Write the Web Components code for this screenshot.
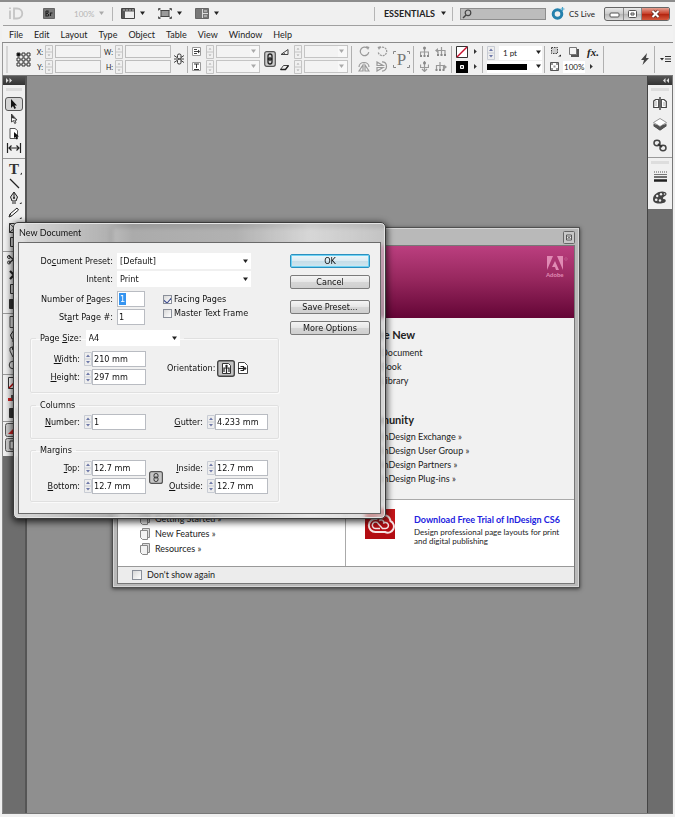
<!DOCTYPE html>
<html lang="en">
<head>
<meta charset="utf-8">
<title>New Document</title>
<style>
html,body{height:100%}
body{margin:0;background:#ececec;overflow:hidden;font-family:Lato,"Open Sans","Noto Sans",sans-serif;font-size:9px;line-height:12px;color:#222}
</style>
</head>
<body>
<app-window></app-window>
<script>
const BASE = `*{box-sizing:border-box} button{font:inherit;color:inherit;padding:0;margin:0;border:0;background:none} input,select{font:inherit;color:inherit;margin:0} svg{display:block}`;
function define(name, html) {
  const t = document.createElement('template');
  t.innerHTML = `<style>${BASE}</style>` + html;
  customElements.define(name, class extends HTMLElement {
    constructor() { super(); this.attachShadow({mode:'open'}).append(t.content.cloneNode(true)); }
  });
}

/* ---------- icons: [width, height, markup] ---------- */
const S = 'fill="none" stroke="#333" stroke-width="1"';
const G = 'fill="none" stroke="#999" stroke-width="1.2"';
const ICONS = {
  id:[15,13,'<path d="M1 3.5V12M1 .5v1.500M5 1.500v10h3c7 0 7-10 0-10z" fill="none" stroke="#c4c4c4" stroke-width="1.800"/>'],
  br:[12,11,'<path d="M.5 .5h11v10H.5z" fill="#777" stroke="#666"/><path d="M3 3v5h2.500M3 5.500h2M3 3h2v2M5.500 6v2M7.500 8V5h2" fill="none" stroke="#222" stroke-width="1.200"/>'],
  down:[7,5,'<path d="M1 .5h5L3.500 4z" fill="#222"/>'],
  downlight:[7,5,'<path d="M1 .5h5L3.500 4z" fill="#aaa"/>'],
  right:[5,7,'<path d="M1 1v5L3.800 3.500z" fill="#333"/>'],
  rulers:[14,11,'<path d="M.5 .5h13v10H.5z" fill="#eee" stroke="#444"/><path d="M1 1h12v2.500H4V10H1z" fill="#555"/><path d="M3 1v2M6 1v2M9 1v2M12 1v2" stroke="#ddd" stroke-width=".7"/>'],
  screen:[14,11,'<path d="M3 2.500h8v6H3z" fill="#999" stroke="#444"/><path d="M.5 2.500V.5h2M11.500 .5h2v2M.5 8.500v2h2M11.500 10.500h2v-2M1 1l2 1.500M13 1l-2 1.500M1 10l2-1.500M13 10l-2-1.500" fill="none" stroke="#555"/>'],
  arrange:[14,11,'<path d="M.5 .5h13v10H.5z" fill="#777" stroke="#666"/><path d="M7.500 1v9M7.500 5.500H13" stroke="#ddd"/><path d="M9 2h3v2H9zM9 7h3v2H9z" fill="#aaa"/>'],
  search:[10,10,'<circle cx="6" cy="3.800" r="2.800" fill="none" stroke="#444" stroke-width="1.200"/><path d="M4 6L1 9" stroke="#444" stroke-width="1.500"/>'],
  live:[14,13,'<circle cx="6.500" cy="7" r="4.300" fill="none" stroke="#2581ad" stroke-width="3"/><path d="M11.500 0v4M9.500 2h4" stroke="#4aa5ca" stroke-width="1.200"/>'],
  ref:[15,15,(()=>{let s='<path d="M2.500 2.500h10v10h-10zM7.500 2.500v10M2.500 7.500h10" fill="none" stroke="#777" stroke-width=".7"/>';for(let i=0;i<9;i++)s+=`<path d="M${i%3*5+1} ${(i/3|0)*5+1}h3v3h-3z" fill="${i?'#f4f4f4':'#000'}" stroke="#333"/>`;return s})()],
  chain:[10,12,'<rect x="3.500" y="1" width="3.500" height="5" rx="1.500" '+S+'/><rect x="3.500" y="6" width="3.500" height="5" rx="1.500" '+S+'/><path d="M0 2.500l3 2M0 6h3M0 9.500l3-2M10 2.500l-3 2M10 6H7M10 9.500l-3-2" stroke="#444"/>'],
  link:[12,16,'<rect x=".7" y=".7" width="10.600" height="14.600" rx="2" fill="#ccc" stroke="#555" stroke-width="1.200"/><rect x="4" y="3" width="4" height="6" rx="2" fill="none" stroke="#222" stroke-width="1.300"/><rect x="4" y="7" width="4" height="6" rx="2" fill="none" stroke="#222" stroke-width="1.300"/>'],
  sx:[9,9,'<path d="M.5 .5h8v8h-8z" fill="#fff" stroke="#999"/><path d="M2 2.500h3M2 4.500h5M2 6.500h3" stroke="#444"/><path d="M6 2.500l2 2-2 2z" fill="#333"/>'],
  sy:[9,9,'<path d="M.5 .5h8v8h-8z" fill="#fff" stroke="#999"/><path d="M2 2h5M4.500 2v4M2 7.500h5" stroke="#333"/>'],
  angle:[9,8,'<path d="M1 6.500h7V1.500zM3.500 4.500l1.500 2" fill="none" stroke="#444"/>'],
  shear:[9,8,'<path d="M.5 6.500h5l3-4h-5z" fill="none" stroke="#444"/><path d="M.5 6.500h5l3-4" fill="none" stroke="#222" stroke-width="1.300"/>'],
  cw:[11,11,'<path d="M8.500 2.200a4.300 4.300 0 1 0 1.300 4" '+G+'/><path d="M7 0l3.500 1L9 4z" fill="#999"/>'],
  ccw:[11,11,'<path d="M2.500 2.200a4.300 4.300 0 1 1-1.300 4" '+G+' stroke-dasharray="2 .8"/><path d="M4 0L.5 1 2 4z" fill="#999"/>'],
  fliph:[12,11,'<path d="M5 4v6H1zM7 4v6h4zM1 6C1 0 11 0 11 6" '+G+'/>'],
  flipv:[12,11,'<path d="M1 4.500h6L1 1zM1 6.500h6l-6 3.500zM6 .8c6 0 6 9.400 0 9.400" '+G+'/>'],
  p:[17,17,'<path d="M.5 3V.5H3M14 .5h2.500V3M.5 14v2.500H3M14 16.500h2.500V14" fill="none" stroke="#888"/>'],
  tree1:[9,11,'<path d="M4.500 3v3M.5 10V6h8v4M4.500 6v4" '+G+'/><circle cx="4.500" cy="2" r="1.500" fill="#888"/><path d="M0 9h2v2H0zM3.500 9h2v2h-2zM7 9h2v2H7z" fill="#888"/>'],
  tree2:[9,11,'<path d="M4.500 0v10M.5 3.500v3h8v-3M2 8l2.500 2.500L7 8" '+G+'/><circle cx="4.500" cy="2" r="1.500" fill="#888"/>'],
  tree3:[12,9,'<path d="M3 8V3.500h7V8M6.500 0v8" '+G+'/><path d="M0 3.500L3 1v5z" fill="#999"/><path d="M2 7h2v2H2zM5.500 7h2v2h-2zM9 7h2v2H9z" fill="#888"/>'],
  tree4:[12,9,'<path d="M1.500 8V3.500h7V8M5 0v8" '+G+'/><path d="M12 5L9 2.500v5z" fill="#999"/><path d="M.5 7h2v2h-2zM4 7h2v2H4zM7.500 7h2v2h-2z" fill="#888"/>'],
  nofill:[12,12,'<path d="M.5 .5h11v11H.5z" fill="#fff" stroke="#333"/><path d="M1 11L11 1" stroke="#c8102e" stroke-width="1.500"/>'],
  stroke:[12,12,'<path d="M0 0h12v12H0z" fill="#000"/><path d="M4.500 4.500h3v3h-3z" fill="#555" stroke="#fff"/>'],
  fxbox:[11,11,'<path d="M1.500 1.500h6v6h-6z" fill="#ccc" stroke="#444" stroke-dasharray="1.500 1"/><path d="M8 10.500h3v-2z" fill="#222"/>'],
  shadow:[10,10,'<path d="M2 2h8v8H2z" fill="#555"/><path d="M.5 .5h7v7h-7z" fill="#f4f4f4" stroke="#777"/>'],
  checker:[9,9,'<path d="M.5 .5h8v8h-8z" fill="#fff" stroke="#555"/><path d="M1 1h2v2H1zM6 1h2v2H6zM3.500 3.500h2v2h-2zM1 6h2v2H1zM6 6h2v2H6z" fill="#999"/>'],
  bolt:[8,12,'<path d="M6 0L0 7h3L1.500 12 8 5H5z" fill="#444"/>'],
  flymenu:[11,8,'<path d="M0 3h4L2 5.500z" fill="#222"/><path d="M5 1.500h6M5 4h6M5 6.500h6" stroke="#333"/>'],
  sel:[18,14,'<rect x=".5" y=".5" width="17" height="13" rx="2.500" fill="#d4d4d4" stroke="#555"/><path d="M6 2v9l2-2 1.500 3 1.500-1-1.500-2.500H12z" fill="#111"/>'],
  dsel:[18,12,'<path d="M6.500 1v8l2-1.500 1.200 3 1.300-.7L9.800 7h2.200z" fill="#fff" stroke="#333" stroke-width=".9"/><path d="M6.500 1v4l4 1z" fill="#333"/>'],
  page:[18,12,'<path d="M5 .5h5l2.500 2v8H5z" fill="#fff" stroke="#555"/><path d="M9 4v6l1.500-1 1 2.500 1.200-.5-1-2.500H14z" fill="#111"/>'],
  gap:[18,12,'<path d="M2.500 1v10M15.500 1v10M4 6h10M6.500 3.500L4 6l2.500 2.500M11.500 3.500L14 6l-2.500 2.500" fill="none" stroke="#222" stroke-width="1.200"/>'],
  type:[18,12,'<path d="M15 11.500h2v-2z" fill="#222"/>'],
  line:[18,12,'<path d="M5 1l9 9" stroke="#222" stroke-width="1.200"/>'],
  pen:[18,12,'<path d="M9 0l3.500 5L11 9H7L5.500 5zM9 1v5M7 11h4" fill="#ddd" stroke="#222"/><circle cx="9" cy="6" r="1" fill="#222"/><path d="M14.500 12h2v-2z" fill="#222"/>'],
  pencil:[18,12,'<path d="M4 10l1-3 7-6 1.500 2-7 6zM5 7l1.500 2" fill="#fff" stroke="#222"/><path d="M14.500 12h2v-2z" fill="#222"/>'],
  frame:[18,12,'<path d="M4.500 1.500h10v9h-10zM4.500 1.500l10 9M14.500 1.500l-10 9" '+S+'/>'],
  rect:[18,12,'<path d="M5.500 1.500h9v9h-9z" fill="#ddd" stroke="#333"/>'],
  scis:[18,12,'<path d="M4 2l9 7M4 9l9-7" stroke="#333" stroke-width="1.500"/><circle cx="4" cy="3" r="1.500" '+S+'/><circle cx="4" cy="8.500" r="1.500" '+S+'/>'],
  xf:[18,12,'<path d="M5 2l8 8M5 10l8-8" stroke="#222" stroke-width="2.200"/>'],
  grad:[18,12,'<path d="M4.500 1.500h10v9h-10z" fill="#888" stroke="#333"/><path d="M5 2h4v8H5z" fill="#333"/>'],
  note:[18,12,'<path d="M5 .5h9v8l-3 3H5z" fill="#eee" stroke="#444"/>'],
  hand:[18,12,'<path d="M5 6V3l2-1 1 3V1h2v4l1-3 2 1v5l-3 4H8z" fill="#fff" stroke="#333"/>'],
  zoom:[18,12,'<circle cx="8" cy="5" r="3.800" '+S+'/><path d="M11 8l3 3" stroke="#333" stroke-width="2"/>'],
  swno:[18,12,'<path d="M3.500 .5h11v11h-11z" fill="#fff" stroke="#333"/><path d="M4 11L14 1" stroke="#c00" stroke-width="1.500"/>'],
  swap:[18,8,'<path d="M3 4h3V1h7v6H3z" fill="#555"/><path d="M3 4h4v3H3z" fill="#c22"/>'],
  prev:[18,14,'<rect x=".5" y=".5" width="17" height="13" rx="2" fill="#ccc" stroke="#555"/><path d="M3 11l8-8v8z" fill="#c22"/>'],
  norm:[18,14,'<rect x=".5" y=".5" width="17" height="13" rx="2" fill="#ccc" stroke="#555"/><path d="M5 3h8v8H5z" fill="#eee" stroke="#333"/>'],
  pages:[14,13,'<path d="M7 0v13" stroke="#333" stroke-width="1.300"/><path d="M.7 4l2-1.500h3v8h-5zM8.300 2.500H11l2.300 2v6h-5z" fill="#fff" stroke="#444" stroke-width="1.200"/><path d="M3 4v5M11 5v4" stroke="#aaa"/>'],
  layers:[14,13,'<path d="M7 4l6.500 4L7 12.500.5 8z" fill="#333"/><path d="M7 .5l6.500 4L7 8.500.5 4.500z" fill="#fff" stroke="#999"/><path d="M.5 5.500L7 9l6.500-3.500V8L7 12.500.5 8z" fill="#555"/>'],
  links:[14,13,'<ellipse cx="4" cy="4" rx="3" ry="2.700" fill="#eee" stroke="#444" stroke-width="1.500"/><ellipse cx="10" cy="9" rx="3" ry="2.700" fill="#eee" stroke="#444" stroke-width="1.500"/><path d="M5 5l4 3" stroke="#333" stroke-width="2"/>'],
  strokes:[13,11,'<path d="M0 1h13" stroke="#555" stroke-dasharray="1 1"/><path d="M0 3.500h13" stroke="#777"/><path d="M0 6h13" stroke="#444" stroke-width="1.500"/><path d="M0 9.500h13" stroke="#222" stroke-width="2.500"/>'],
  palette:[14,13,'<path d="M12 1C7-1 0 3 0 8c0 5 6 5 10 4 4-1 3-4 1-4-2 0-1-2 1-3s2-3 0-4z" fill="#444"/><g fill="#eee"><circle cx="8" cy="3.200" r="1.200"/><circle cx="4.200" cy="5" r="1.200"/><circle cx="3.200" cy="8.800" r="1.300"/><circle cx="7" cy="9.500" r="1.200"/><circle cx="11.500" cy="3" r=".8"/></g>'],
  expand:[8,5,'<path d="M1 0l2.500 2.500L1 5zM4.500 0L7 2.500 4.500 5z" fill="#ddd"/>'],
  collapse:[8,5,'<path d="M3.500 0L1 2.500 3.500 5zM7 0L4.500 2.500 7 5z" fill="#ddd"/>'],
  min:[19,14,'<rect x="5" y="6" width="9" height="4" rx="1" fill="#fff" stroke="#555"/>'],
  max:[19,14,'<rect x="5.500" y="3.500" width="8" height="7" rx="1" fill="#fff" stroke="#555"/><path d="M8 6h3v2H8z" fill="#ddd" stroke="#555"/>'],
  close:[29,14,'<path d="M11.500 4l6 6M17.500 4l-6 6" stroke="#5d2a22" stroke-width="3.600"/><path d="M11.500 4l6 6M17.500 4l-6 6" stroke="#fff" stroke-width="2"/>'],
  wclose:[12,13,'<rect x=".5" y=".5" width="11" height="12" rx="1" fill="#c8c8c8" stroke="#666"/><path d="M3.500 4h5v5h-5z" fill="#eee" stroke="#555"/><path d="M4.500 5l3 3M7.500 5l-3 3" stroke="#555"/>'],
  adobe:[22,16,'<g fill="#e08bb4"><path d="M1 0h6L1 14zM11 0h6v14zM9 5l4 9h-3l-1-3H6z"/></g><circle cx="20" cy="3" r="1.300" fill="none" stroke="#c0608f" stroke-width=".7"/>'],
  doc:[10,12,'<path d="M2.500 .5h7v9h-7z" fill="#dcdcdc" stroke="#888"/><path d="M.5 2.500h7v9h-5l-2-2z" fill="#f2f2f2" stroke="#888"/>'],
  cc:[30,32,'<path d="M0 1h30v30H0z" fill="#b30d12"/><path d="M0 1h30v13H0z" fill="#cf1d20" opacity=".6"/><g fill="none" stroke="#f6e4e4" stroke-width="2"><path d="M20 24H10.500a6.500 6.500 0 1 1 1-12.900A7.500 7.500 0 0 1 25.500 13 5.800 5.800 0 0 1 20 24z"/><path d="M15 20.500h-4.500a3.200 3.200 0 1 1 2.800-4.800l4.200 4.800h3a3 3 0 1 0-2.300-5M14 12.500c2.500-1.500 4.500 0 5 2" stroke-width="1.500"/></g>'],
  portrait:[18,17,'<rect x=".7" y=".7" width="16.600" height="15.600" rx="2" fill="#c3c3c3" stroke="#444" stroke-width="1.400"/><path d="M5.500 3.500h6l2 2v8h-8z" fill="#fff" stroke="#333"/><circle cx="9.500" cy="6" r="1.200" fill="#222"/><path d="M7 12V8h5v4M9.500 7v6" stroke="#222" stroke-width="1.200" fill="none"/>'],
  landscape:[12,13,'<path d="M1.500 .5h6l3 3v8h-9z" fill="#fff" stroke="#444"/><circle cx="8" cy="6.500" r="1.300" fill="#222"/><path d="M1 6.500h6M3.500 4.500h3v4h-3" stroke="#222" stroke-width="1.200" fill="none"/>'],
  linkbtn:[14,13,'<rect x=".6" y=".6" width="12.800" height="11.800" rx="2" fill="#c6c6c6" stroke="#555" stroke-width="1.200"/><rect x="5" y="2.500" width="4" height="4.500" rx="1.800" '+S+'/><rect x="5" y="6" width="4" height="4.500" rx="1.800" '+S+'/>'],
  spin:[8,14,'<path d="M.5 .5h7v13h-7zM.5 7h7" fill="#eee" stroke="#c8ccd4"/><path d="M2 5h4L4 2.500zM2 9h4l-2 2.500z" fill="#6d78a8"/>'],
  spinlight:[8,14,'<path d="M.5 .5h7v13h-7zM.5 7h7" fill="#f0f0f0" stroke="#c4c4c4"/><path d="M2.500 4.500h3L4 3zM2.500 9.500h3L4 11z" fill="#aaa"/>'],
};
customElements.define('ui-icon', class extends HTMLElement {
  connectedCallback() {
    if (this.shadowRoot) return;
    const [w,h,m] = ICONS[this.getAttribute('name')];
    this.attachShadow({mode:'open'}).innerHTML = `<style>:host{display:block;flex:none;width:${w}px;height:${h}px}svg{display:block}</style><svg width="${w}" height="${h}" viewBox="0 0 ${w} ${h}" aria-hidden="true">${m}</svg>`;
  }
});

/* ---------- form elements of the dialog ---------- */
customElements.define('ui-field', class extends HTMLElement {
  connectedCallback() {
    if (this.shadowRoot) return;
    const a = n => this.getAttribute(n);
    const spin = this.hasAttribute('spin');
    const control = this.hasAttribute('select')
      ? `<span class="sel"><select id="c"><option>${a('value')}</option></select><ui-icon name="down"></ui-icon></span>`
      : `${spin?'<ui-icon name="spin"></ui-icon>':''}<span class="box"><input id="c" value="${a('value')}"${this.hasAttribute('picked')?' class="picked"':''}></span>`;
    this.attachShadow({mode:'open'}).innerHTML = `<style>${BASE}
      :host{display:flex;align-items:center;height:16px}
      label{width:var(--label);flex:none;text-align:right;margin-right:4px;white-space:nowrap}
      .box{width:var(--box,54px);height:16px;background:#fff;border:1px solid #b9bcc2;flex:none;display:flex;align-items:center}
      input{width:100%;border:0;padding:0 1px;height:14px;background:none;outline:0;line-height:14px}
      .picked{width:7px;padding:0 0 0 1px;margin-left:1px;background:#3594f0;color:#fff;height:12px;line-height:12px}
      .sel{width:var(--box,134px);height:16px;background:#fff;display:flex;align-items:center;padding-right:2px}
      select{appearance:none;border:0;background:none;flex:1;min-width:0;height:16px;padding:0 3px;outline:0}
    </style><label for="c">${this.innerHTML}</label>${control}`;
  }
});
customElements.define('ui-check', class extends HTMLElement {
  connectedCallback() {
    if (this.shadowRoot) return;
    this.attachShadow({mode:'open'}).innerHTML = `<style>${BASE}
      :host{display:block}
      label{display:flex;align-items:center;gap:2px;height:14px;white-space:nowrap}
      input{appearance:none;width:9px;height:9px;border:1px solid #8a8f99;background:linear-gradient(135deg,#d8d8d8,#fff);display:grid;place-items:center;flex:none;overflow:hidden}
      input:checked::after{content:"";width:4px;height:6px;border:solid #35458c;border-width:0 1px 1px 0;transform:rotate(40deg)}
      :host([large]) label{gap:5px} :host([large]) input{width:10px;height:10px}
    </style><label><input type="checkbox"${this.hasAttribute('checked')?' checked':''}><slot></slot></label>`;
  }
});
define('ui-button', `<style>
  :host{display:block}
  button{display:block;width:100%;height:14px;line-height:12px;border:1px solid #7b7b7b;border-radius:2px;background:linear-gradient(#f4f4f4,#e6e6e6 48%,#d6d6d6 52%,#cfcfcf);color:#111}
  :host([primary]) button{border-color:#2c8fbe;box-shadow:inset 0 0 0 1px #6fd3f5;background:linear-gradient(#eef6fa,#dcebf2 48%,#c6dde8 52%,#cfe6ef)}
</style><button type="button"><slot></slot></button>`);
define('ui-group', `<style>
  :host{display:block}
  fieldset{margin:0;padding:0;border:1px solid #e0e0e0;border-radius:2px;box-shadow:inset 1px 1px #fafafa,1px 1px #fafafa;min-width:0}
  legend{padding:0 4px;margin-left:5px;height:var(--legend,12px)}
</style><fieldset><legend><slot name="legend"></slot></legend><slot></slot></fieldset>`);

define('new-document', `<style>
  :host{display:flex;flex-direction:column;padding:0 4px 4px;border:1px solid #3a3a3a;border-radius:5px;
    background:linear-gradient(90deg,rgba(225,225,225,.9),rgba(190,190,190,.7) 26%,rgba(165,165,165,.7) 32%,rgba(175,175,175,.7) 60%,rgba(225,225,225,.75) 80%,rgba(200,200,200,.7));
    backdrop-filter:blur(2px);box-shadow:inset 0 0 0 1px #e4e4e4,0 2px 7px 1px rgba(0,0,0,.75);
    font-family:"DejaVu Sans Condensed","Open Sans",sans-serif;color:#111}
  h1{margin:0;font:9px/19px Lato,"Open Sans",sans-serif;height:19px;padding-left:1px}
  form{flex:1;background:#f0f0f0;border:1px solid #6a6a6a;display:grid;grid-template-columns:249px 80px;column-gap:11px;padding:10px 10px 10px 11px;align-content:start;align-items:start}
  .f{display:grid}
  .top{display:grid;row-gap:2px;--label:83px}
  .pair{display:grid;grid-template-columns:auto 1fr;column-gap:18px;margin-top:4px;--box:28px;--label:83px}
  .pair>div{display:grid;row-gap:2px}
  .pair>.checks{row-gap:0;align-content:start;padding-top:1px}
  .size{margin-top:5px;--legend:16px}
  .size ui-field[select]{--label:auto;--box:94px}
  .row{display:grid;grid-template-columns:115px 1fr;align-items:center;--label:49px}
  .stack{display:grid;row-gap:2px}
  .ori{display:flex;align-items:center;padding-left:21px;gap:2px}
  .ori button{display:block}
  .cols{margin-top:6px} .cols .row{padding:3px 0 8px}
  .marg{margin-top:5px} .marg .row{padding:4px 0 7px;grid-template-columns:118px 14px 1fr}
  .size .row{padding:5px 0 7px}
  .cols .r{--label:57px} .marg .r{--label:40px}
  .r{--box:53px}
  .buttons{display:grid;padding-top:1px;row-gap:7px}
  .buttons ui-button:nth-child(3){margin-top:4px}
</style>
<h1>New Document</h1>
<form>
 <div class="f">
  <div class="top"><ui-field select value="[Default]">Do<u>c</u>ument Preset:</ui-field><ui-field select value="Print">Intent:</ui-field></div>
  <div class="pair"><div><ui-field value="1" picked>Number of <u>P</u>ages:</ui-field><ui-field value="1">St<u>a</u>rt Page #:</ui-field></div>
   <div class="checks"><ui-check checked>Facing Pages</ui-check><ui-check>Master Text Frame</ui-check></div></div>
  <ui-group class="size"><ui-field slot="legend" select value="A4">Page <u>S</u>ize:</ui-field>
   <div class="row"><div class="stack"><ui-field spin value="210 mm"><u>W</u>idth:</ui-field><ui-field spin value="297 mm"><u>H</u>eight:</ui-field></div>
    <div class="ori">Orientation:<button type="button" aria-label="Portrait"><ui-icon name="portrait"></ui-icon></button><button type="button" aria-label="Landscape"><ui-icon name="landscape"></ui-icon></button></div></div>
  </ui-group>
  <ui-group class="cols"><span slot="legend">Columns</span>
   <div class="row"><ui-field spin value="1"><u>N</u>umber:</ui-field><ui-field class="r" spin value="4.233 mm"><u>G</u>utter:</ui-field></div>
  </ui-group>
  <ui-group class="marg"><span slot="legend">Margins</span>
   <div class="row"><div class="stack"><ui-field spin value="12.7 mm"><u>T</u>op:</ui-field><ui-field spin value="12.7 mm"><u>B</u>ottom:</ui-field></div>
    <button type="button" aria-label="Make all settings the same"><ui-icon name="linkbtn"></ui-icon></button>
    <div class="stack r"><ui-field spin value="12.7 mm"><u>I</u>nside:</ui-field><ui-field spin value="12.7 mm"><u>O</u>utside:</ui-field></div></div>
  </ui-group>
 </div>
 <div class="buttons"><ui-button primary>OK</ui-button><ui-button>Cancel</ui-button><ui-button>Save Preset...</ui-button><ui-button>More Options</ui-button></div>
</form>`);

/* ---------- welcome screen ---------- */
define('welcome-screen', `<style>
  :host{display:flex;flex-direction:column;background:#b9b9b9;border:1px solid #505050;padding:0 4px 3px;box-shadow:inset 0 0 0 1px #d6d6d6,0 1px 4px rgba(0,0,0,.6);color:#222}
  header{height:17px;display:flex;justify-content:flex-end;align-items:center;padding-top:2px}
  .banner{height:73px;background:linear-gradient(#bb3f7f,#98285f 45%,#640536);display:flex;justify-content:flex-end;padding:10px 6px;border-top:1px solid #777}
  .logo{width:22px;color:#e08bb4;font-size:6px;line-height:6px;font-weight:700}
  .main{flex:1;display:grid;grid-template-columns:228px 1fr;background:#fff;min-height:0}
  .left{border-right:1px solid #aaa;padding:0 0 10px 22px;display:flex;flex-direction:column;justify-content:flex-end}
  .left a{height:15px;gap:5px}
  a{display:flex;align-items:center;height:14px;color:#222;text-decoration:none;font-size:9px;white-space:nowrap}
  .right{display:flex;flex-direction:column}
  .links{background:#f1f1f1;flex:1;padding:10px 0 0 35px;border-bottom:1px solid #aaa}
  h2{font-size:11px;line-height:14px;margin:0 0 4px -24px}
  .links h2:nth-of-type(2){margin-top:25px;margin-bottom:3px}
  .ad{height:66px;display:flex;padding:9px 0 0 19px;gap:19px}
  .ad ui-icon{margin-top:-1px}
  .ad a{color:#2222e0;font-weight:700;height:19px;align-items:flex-start;padding-top:5px}
  p{margin:0;font-size:8px;line-height:9px;width:150px}
  footer{height:17px;background:#ececec;border-top:1px solid #999;padding:1px 0 0 14px}
  .in{flex:1;display:flex;flex-direction:column;border:1px solid #777;border-top:0;min-height:0}
</style>
<header><button type="button" aria-label="Close"><ui-icon name="wclose"></ui-icon></button></header>
<div class="in">
<div class="banner"><div class="logo"><ui-icon name="adobe"></ui-icon>Adobe</div></div>
<div class="main">
 <div class="left"><a href="#"><ui-icon name="doc"></ui-icon>Getting Started »</a><a href="#"><ui-icon name="doc"></ui-icon>New Features »</a><a href="#"><ui-icon name="doc"></ui-icon>Resources »</a></div>
 <div class="right"><div class="links"><h2>Create New</h2><a href="#">Document</a><a href="#">Book</a><a href="#">Library</a>
  <h2>Community</h2><a href="#">InDesign Exchange »</a><a href="#">InDesign User Group »</a><a href="#">InDesign Partners »</a><a href="#">InDesign Plug-ins »</a></div>
  <div class="ad"><ui-icon name="cc"></ui-icon><div><a href="#">Download Free Trial of InDesign CS6</a><p>Design professional page layouts for print and digital publishing</p></div></div></div>
</div>
<footer><ui-check large>Don't show again</ui-check></footer>
</div>`);

/* ---------- bars ---------- */
define('title-bar', `<style>
  :host{display:flex;align-items:center;height:24px;border-bottom:1px solid #a0a0a0;margin:0 1px 0 1px;padding:0 2px 0 6px;background:#f0f0f0}
  button{display:flex;align-items:center;gap:4px;white-space:nowrap}
  .v{width:1px;height:14px;background:#b5b5b5}
  .bridge{margin-left:19px}
  .zoom{color:#b5b5b5;margin:0 7px 0 19px;gap:4px;font-size:8px}
  .a{margin-left:8px}.b{margin-left:12px}
  .ws{margin:0 5px 0 9px;font-weight:700;gap:5px}
  .search{display:flex;align-items:center;flex:none;width:86px;height:12px;border:1px solid #8d8d8d;background:#bcbcbc;padding-left:1px;margin:0 5px 0 7px}
  .search input{width:70px;height:10px;border:0;background:none;outline:0}
  .live{font-size:8px}
  .win{margin-left:9px;display:flex;border:1px solid #666;border-radius:2px 2px 3px 3px;overflow:hidden;background:linear-gradient(#e9e9e9,#c9c9c9 50%,#b6b6b6 52%,#ddd)}
  .win button+button{border-left:1px solid #888}
  .win button{height:12px;width:18px;justify-content:center}
  .win .x{width:28px;background:linear-gradient(#e4a193,#c8402a 48%,#b32510 52%,#d4583c)}
  .spring{margin-left:auto}
</style>
<ui-icon name="id"></ui-icon><button type="button" class="bridge" aria-label="Bridge"><ui-icon name="br"></ui-icon></button>
<button type="button" class="zoom">100%<ui-icon name="downlight"></ui-icon></button><span class="v"></span>
<button type="button" class="a" aria-label="View options"><ui-icon name="rulers"></ui-icon><ui-icon name="down"></ui-icon></button>
<button type="button" class="b" aria-label="Screen mode"><ui-icon name="screen"></ui-icon><ui-icon name="down"></ui-icon></button>
<button type="button" class="b" aria-label="Arrange"><ui-icon name="arrange"></ui-icon><ui-icon name="down"></ui-icon></button>
<span class="v spring"></span><button type="button" class="ws">ESSENTIALS<ui-icon name="down"></ui-icon></button><span class="v"></span>
<label class="search" aria-label="Search"><ui-icon name="search"></ui-icon><input type="text"></label>
<button type="button" class="live"><ui-icon name="live"></ui-icon>CS Live</button>
<div class="win"><button type="button" aria-label="Minimize"><ui-icon name="min"></ui-icon></button><button type="button" aria-label="Maximize"><ui-icon name="max"></ui-icon></button><button type="button" class="x" aria-label="Close"><ui-icon name="close"></ui-icon></button></div>`);
define('menu-bar', `<style>
  :host{display:flex;gap:11px;height:17px;padding-top:1px;align-items:center;padding-left:7px;background:#f2f2f2;border-bottom:1px solid #8a8a8a}
</style>${['File','Edit','Layout','Type','Object','Table','View','Window','Help'].map(x=>`<button type="button">${x}</button>`).join('')}`);

const num = lab => `<label class="n">${lab}<ui-icon name="spinlight"></ui-icon><input></label>`;
const combo = icon => `<label class="n c"><ui-icon name="${icon}" class="k"></ui-icon><ui-icon name="spinlight"></ui-icon><span><input><ui-icon name="downlight"></ui-icon></span></label>`;
const icons = (...names) => names.map(n => `<ui-icon name="${n}"></ui-icon>`).join('');
define('control-bar', `<style>
  :host{display:flex;align-items:center;height:33px;background:#f0f0f0;border-bottom:1px solid #777;border-left:1px solid #999;padding:0 2px 0 3px;font-size:8px}
  .g{display:grid;row-gap:1px;align-content:center;flex:none}
  .grip{width:2px;height:27px;background:#d5d5d5;margin-right:8px}
  .n{display:flex;align-items:center;height:14px;gap:2px}
  .n input{width:46px;height:13px;border:1px solid #bdbdbd;background:#f3f3f3;padding:0}
  .xy{margin-left:6px;font-size:7px}
  .xy .n{width:64px;justify-content:flex-end}
  .c span{display:flex;align-items:center;width:44px;height:13px;border:1px solid #c4c4c4;background:#f8f8f8;padding-right:2px}
  .c span input{flex:1;min-width:0;border:0;height:11px}
  .k{margin-right:3px}
  .v{width:1px;height:27px;background:#b0b0b0;flex:none}
  .i{grid-template-columns:auto auto;justify-items:center;align-items:center;gap:4px 6px}
  .sw{gap:3px 5px}
  .p{display:grid;place-items:center;margin:0 3px 0 5px;font:17px/17px "Liberation Serif",serif;color:#777}
  .p>*{grid-area:1/1}
  .pt{display:flex;align-items:center;gap:4px;height:14px}
  .pt .s{display:flex;align-items:center;background:#fff}
  .pct{background:#fff;padding:0 1px}
  select{appearance:none;border:0;background:#fff;width:36px;height:14px;padding:0 0 0 4px;font-size:8px}
  .bar{display:flex;align-items:center;gap:8px;height:12px;background:#fff}
  .bar i{width:40px;height:6px;background:#000}
  .fx{font:italic 700 11px/12px "Liberation Serif",serif}
  .end{margin-left:auto;display:flex;align-items:center;gap:5px}
  .m3{margin:0 3px}.m4{margin:0 4px}.m5{margin:0 5px 0 2px}.m6{margin:0 6px 0 3px}.r6{margin-right:6px}.l4{margin-left:4px}
</style>
<span class="grip"></span><button type="button" aria-label="Reference point"><ui-icon name="ref"></ui-icon></button>
<div class="g xy">${num('X:')}${num('Y:')}</div><div class="g xy">${num('W:')}${num('H:')}</div>
<button type="button" class="m3" aria-label="Constrain size"><ui-icon name="chain"></ui-icon></button><span class="v"></span>
<div class="g l4">${combo('sx')}${combo('sy')}</div><button type="button" class="m4" aria-label="Constrain scaling"><ui-icon name="link"></ui-icon></button>
<div class="g">${combo('angle')}${combo('shear')}</div><span class="v m6"></span>
<div class="g i">${icons('cw','ccw','fliph','flipv')}</div>
<div class="p"><ui-icon name="p"></ui-icon><span>P</span></div><span class="v r6"></span>
<div class="g i">${icons('tree1','tree3','tree2','tree4')}</div><span class="v m4"></span>
<div class="g i sw">${icons('nofill','right','stroke','right')}</div><span class="v m4"></span>
<div class="g"><label class="pt" aria-label="Stroke weight"><ui-icon name="spin"></ui-icon><span class="s"><select><option>1 pt</option></select><ui-icon name="down"></ui-icon></span></label><button type="button" class="bar" aria-label="Stroke type"><i></i><ui-icon name="down"></ui-icon></button></div><span class="v m5"></span>
<div class="g"><div class="pt"><ui-icon name="fxbox"></ui-icon><ui-icon name="shadow" class="l4"></ui-icon><span class="fx l4">fx.</span></div><div class="pt"><ui-icon name="checker"></ui-icon><span class="pct">100%</span><ui-icon name="right"></ui-icon></div></div><span class="v l4"></span>
<div class="end"><ui-icon name="bolt"></ui-icon><span class="v"></span><ui-icon name="flymenu"></ui-icon></div>`);

/* ---------- side panels ---------- */
const tool = n => `<button type="button" aria-label="${n}"><ui-icon name="${n}"></ui-icon>${n==='type'?'<b>T</b>':''}</button>`;
const SIDE = `:host{display:flex;flex-direction:column;background:#6d6d6d}
  header{height:9px;background:linear-gradient(#555,#333);display:flex;align-items:center;padding:0 2px}
  .grip{height:3px;margin:3px 3px 0;background:#ddd}
  hr{width:100%;margin:0;border:0;border-top:1px solid #999}
  button{display:flex;align-items:center;justify-content:center}`;
define('tool-panel', `<style>${SIDE}
  :host{border-left:1px solid #888;border-right:2px solid #555;}
  .body{background:#f0f0f0;display:flex;flex-direction:column;padding-bottom:3px}
  button{height:14px;width:22px;flex:none;margin-bottom:1px}
  button:nth-of-type(3n){margin-bottom:0}
  button>*{grid-area:1/1}
  button{display:grid;place-items:center}
  b{font:700 15px/14px "Liberation Serif",serif;color:#333}
  .grip{margin-bottom:6px}
  hr{margin:1px 0}
  hr:first-of-type{margin:2px 0 3px}
</style><header><ui-icon name="expand"></ui-icon></header>
<div class="body"><div class="grip"></div>${['sel','dsel','page','gap'].map(tool).join('')}<hr>${['type','line','pen','pencil','frame','rect'].map(tool).join('')}<hr>${['scis','xf','rect','grad'].map(tool).join('')}<hr>${['note','pen','hand','zoom'].map(tool).join('')}<hr>${['swno','swap','grad'].map(tool).join('')}<hr>${['prev','norm'].map(tool).join('')}</div>`);
define('dock-panel', `<style>${SIDE}
  :host{border-left:1px solid #444;border-right:1px solid #777}
  header{justify-content:flex-end}
  .set{background:#f0f0f0;display:flex;flex-direction:column;padding-bottom:1px}
  .set button{height:21px}
  .set .grip{margin-bottom:2px}
</style><header><ui-icon name="collapse"></ui-icon></header>
<div class="set"><div class="grip"></div>${['pages','layers','links'].map(tool).join('')}</div><hr>
<div class="set"><div class="grip"></div>${['strokes','palette'].map(tool).join('')}</div>`);

define('app-window', `<style>
  :host{box-sizing:border-box;display:flex;flex-direction:column;height:100vh;border-top:2px solid #8c8c8c;padding:0 2px 3px;background:#f0f0f0;position:relative}
  .work{flex:1;display:grid;grid-template-columns:25px 1fr 26px;background:#8f8f8f;border-bottom:1px solid #777;min-height:0}
  tool-panel,dock-panel{min-height:0;overflow:hidden}
  welcome-screen{position:absolute;left:112px;top:225px;width:468px;height:361px}
  new-document{position:absolute;left:13px;top:220px;width:373px;height:297px}
</style>
<title-bar></title-bar><menu-bar></menu-bar><control-bar></control-bar>
<div class="work"><tool-panel></tool-panel><main></main><dock-panel></dock-panel></div>
<welcome-screen></welcome-screen><new-document></new-document>`);
</script>
</body>
</html>
